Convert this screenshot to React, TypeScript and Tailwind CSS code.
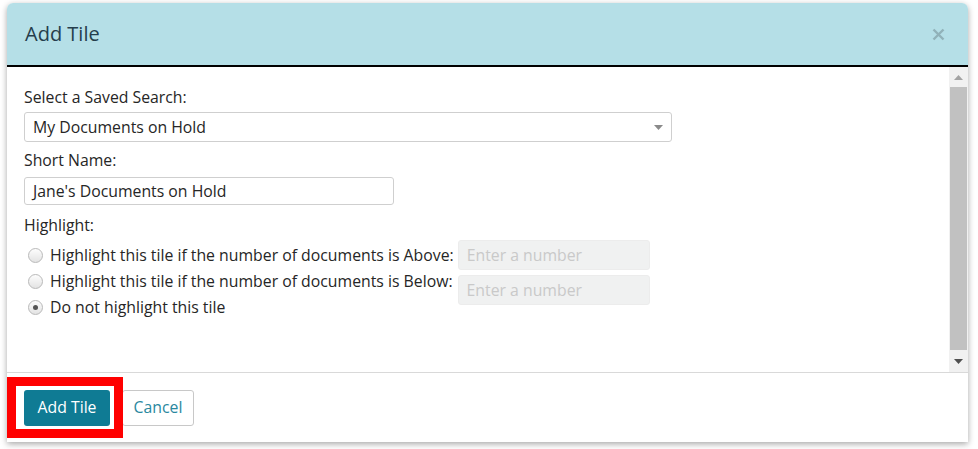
import React from "react";

const font = { fontFamily: '"Open Sans", "Noto Sans", Arial, sans-serif' };

function Radio({ checked = false }: { checked?: boolean }) {
  return (
    <span className="flex h-[15px] w-[15px] shrink-0 items-center justify-center rounded-full border border-[#b9b9b9] bg-[linear-gradient(#fdfdfd,#e3e3e3)]">
      {checked && <span className="h-[5px] w-[5px] rounded-full bg-[#555]" />}
    </span>
  );
}

function NumberBox() {
  return (
    <div className="flex h-[30px] w-[192px] shrink-0 items-center rounded-[3px] border border-[#ececec] bg-[#f0f1f1] pl-[8px] text-[15.8px] text-[#c9c9c9]">
      Enter a number
    </div>
  );
}

export default function App() {
  return (
    <div className="h-[449px] w-[978px] overflow-hidden bg-white pl-[7px] pt-[3px]" style={font}>
      <div className="flex h-[439px] w-[961px] flex-col overflow-hidden rounded-t-[6px] bg-white shadow-[0_2px_6px_rgba(0,0,0,0.35)]">
        {/* header */}
        <div className="flex h-[64px] shrink-0 items-center justify-between border-b-2 border-black bg-[#b5dfe7] pl-[18px] pr-[23px]">
          <span className="text-[20px] text-[#253d4c]">Add Tile</span>
          <svg width="13" height="13" viewBox="0 0 13 13" className="mt-[1px]">
            <path d="M1.5 1.5 L11.5 11.5 M11.5 1.5 L1.5 11.5" stroke="#91b2b9" strokeWidth="2.4" />
          </svg>
        </div>

        {/* body */}
        <div className="flex h-[305px] shrink-0">
          <div className="flex-1 pl-[17px] pt-[20px] text-[15.8px] leading-[20px] text-[#262626]">
            <div>Select a Saved Search:</div>
            <div className="mt-[5px] flex h-[30px] w-[648px] items-center justify-between rounded-[3px] border border-[#cfcfcf] pl-[8px] pr-[8px]">
              <span>My Documents on Hold</span>
              <svg width="9" height="5" viewBox="0 0 9 5">
                <path d="M0 0 H9 L4.5 5 Z" fill="#8a8a8a" />
              </svg>
            </div>

            <div className="mt-[8px]">Short Name:</div>
            <div className="mt-[7px] flex h-[28px] w-[370px] items-center rounded-[3px] border border-[#cfcfcf] pl-[8px]">
              Jane's Documents on Hold
            </div>

            <div className="mt-[10px]">Highlight:</div>

            <div className="mt-[5px] flex h-[30px] items-center pl-[4px]">
              <Radio />
              <span className="ml-[7px] whitespace-nowrap">Highlight this tile if the number of documents is Above:</span>
              <span className="ml-[4px]">
                <NumberBox />
              </span>
            </div>
            <div className="mt-px flex h-[26px] items-start pl-[4px]">
              <span className="flex h-[20px] items-center">
                <Radio />
              </span>
              <span className="ml-[7px] whitespace-nowrap">Highlight this tile if the number of documents is Below:</span>
              <span className="ml-[5px] mt-[4px]">
                <NumberBox />
              </span>
            </div>
            <div className="flex h-[20px] items-center pl-[4px]">
              <Radio checked />
              <span className="ml-[7px]">Do not highlight this tile</span>
            </div>
          </div>

          {/* scrollbar */}
          <div className="flex w-[19px] shrink-0 flex-col items-center bg-[#f1f1f1] pr-px">
            <div className="flex h-[20px] items-center justify-center">
              <svg width="9" height="5" viewBox="0 0 9 5">
                <path d="M0 5 H9 L4.5 0 Z" fill="#a3a3a3" />
              </svg>
            </div>
            <div className="w-[17px] flex-1 bg-[#c1c1c1]" />
            <div className="flex h-[22px] items-center justify-center">
              <svg width="9" height="5" viewBox="0 0 9 5">
                <path d="M0 0 H9 L4.5 5 Z" fill="#505050" />
              </svg>
            </div>
          </div>
        </div>

        {/* footer */}
        <div className="relative flex flex-1 items-start gap-[12px] border-t border-[#d9d9d9] pl-[17px] pt-[17px]">
          <button className="flex h-[36px] w-[86px] items-center justify-center rounded-[3px] bg-[#0f7b94] text-[15.8px] text-white">
            Add Tile
          </button>
          <button className="flex h-[36px] w-[72px] items-center justify-center rounded-[3px] border border-[#c8c8c8] bg-white text-[15.8px] text-[#2a88a0]">
            Cancel
          </button>
          <div className="pointer-events-none absolute left-0 top-[4px] h-[61px] w-[116px] border-[9px] border-[#ff0000]" />
        </div>
      </div>
    </div>
  );
}
